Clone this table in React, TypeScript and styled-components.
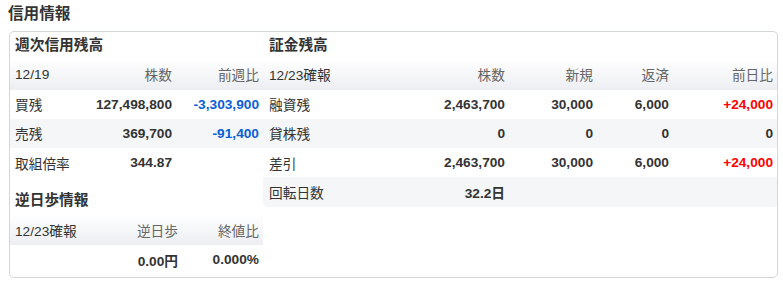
import React from "react";
import styled, { createGlobalStyle } from "styled-components";

const GlobalStyle = createGlobalStyle`
  html, body {
    margin: 0;
    padding: 0;
    background: #fff;
  }
  body {
    font-family: "Liberation Sans", "Noto Sans CJK JP", sans-serif;
    color: #333;
  }
`;

const Page = styled.div`
  width: 783px;
  display: flex;
  flex-direction: column;
`;

const Title = styled.h2`
  margin: 3px 0 0 8px;
  height: 22px;
  line-height: 22px;
  font-size: 15.6px;
  font-weight: bold;
  color: #333;
`;

const Panel = styled.div`
  margin: 6px 0 0 9px;
  width: 767px;
  border: 1px solid #d3d6db;
  border-radius: 5px;
  display: flex;
  padding-bottom: 2.5px;
`;

const Column = styled.div<{ $width: number }>`
  width: ${(p) => p.$width}px;
  display: flex;
  flex-direction: column;
`;

const Heading = styled.h3<{ $indent: number; $gap?: number }>`
  margin: ${(p) => p.$gap ?? 0}px 0 0 0;
  padding-left: ${(p) => p.$indent}px;
  height: 27px;
  line-height: 27px;
  font-size: 14.7px;
  font-weight: bold;
  color: #333;
`;

const Table = styled.table`
  border-collapse: collapse;
  table-layout: fixed;
  width: 100%;
  font-size: 13.7px;
`;

const HeadRow = styled.tr`
  height: 30.5px;
  background: linear-gradient(to bottom, #ffffff 0%, #eceef2 100%);
`;

const Row = styled.tr<{ $shade?: boolean; $last?: boolean }>`
  height: 29.3px;
  background: ${(p) => (p.$shade ? "#f5f6f8" : "#fff")};
  td:first-child {
    border-bottom-left-radius: ${(p) => (p.$last ? "5px" : "0")};
  }
  td:last-child {
    border-bottom-right-radius: ${(p) => (p.$last ? "4px" : "0")};
  }
`;

const Th = styled.th<{ $indent?: number }>`
  padding: 0 4px 0 ${(p) => p.$indent ?? 4}px;
  font-weight: normal;
  text-align: right;
  color: #666;
  white-space: nowrap;
  &:first-child {
    text-align: left;
    color: #333;
  }
`;

const Label = styled.td<{ $indent: number }>`
  padding: 0 4px 0 ${(p) => p.$indent}px;
  text-align: left;
  white-space: nowrap;
`;

type Tone = "plain" | "up" | "down";

const Num = styled.td<{ $tone?: Tone }>`
  padding: 0 4px;
  text-align: right;
  font-weight: bold;
  white-space: nowrap;
  color: ${(p) =>
    p.$tone === "up" ? "#ff0000" : p.$tone === "down" ? "#0a60d6" : "#333"};
`;

const tone = (v: string): Tone =>
  v.startsWith("+") ? "up" : v.startsWith("-") ? "down" : "plain";

const weekly = [
  ["買残", "127,498,800", "-3,303,900"],
  ["売残", "369,700", "-91,400"],
  ["取組倍率", "344.87", ""],
];

const margin = [
  ["融資残", "2,463,700", "30,000", "6,000", "+24,000"],
  ["貸株残", "0", "0", "0", "0"],
  ["差引", "2,463,700", "30,000", "6,000", "+24,000"],
];

export default function App() {
  return (
    <Page>
      <GlobalStyle />
      <Title>信用情報</Title>
      <Panel>
        <Column $width={253}>
          <Heading $indent={5}>週次信用残高</Heading>
          <Table>
            <colgroup>
              <col style={{ width: 80 }} />
              <col style={{ width: 86 }} />
              <col style={{ width: 87 }} />
            </colgroup>
            <thead>
              <HeadRow>
                <Th $indent={5}>12/19</Th>
                <Th>株数</Th>
                <Th>前週比</Th>
              </HeadRow>
            </thead>
            <tbody>
              {weekly.map((r, i) => (
                <Row key={r[0]} $shade={i % 2 === 1}>
                  <Label $indent={5}>{r[0]}</Label>
                  <Num>{r[1]}</Num>
                  <Num $tone={tone(r[2])}>{r[2]}</Num>
                </Row>
              ))}
            </tbody>
          </Table>

          <Heading $indent={5} $gap={10}>
            逆日歩情報
          </Heading>
          <Table>
            <colgroup>
              <col style={{ width: 90 }} />
              <col style={{ width: 82 }} />
              <col style={{ width: 81 }} />
            </colgroup>
            <thead>
              <HeadRow>
                <Th $indent={5}>12/23確報</Th>
                <Th>逆日歩</Th>
                <Th>終値比</Th>
              </HeadRow>
            </thead>
            <tbody>
              <Row>
                <Label $indent={5}></Label>
                <Num>0.00円</Num>
                <Num>0.000%</Num>
              </Row>
            </tbody>
          </Table>
        </Column>

        <Column $width={514}>
          <Heading $indent={6}>証金残高</Heading>
          <Table>
            <colgroup>
              <col style={{ width: 137 }} />
              <col style={{ width: 109 }} />
              <col style={{ width: 88 }} />
              <col style={{ width: 76 }} />
              <col style={{ width: 104 }} />
            </colgroup>
            <thead>
              <HeadRow>
                <Th $indent={6}>12/23確報</Th>
                <Th>株数</Th>
                <Th>新規</Th>
                <Th>返済</Th>
                <Th>前日比</Th>
              </HeadRow>
            </thead>
            <tbody>
              {margin.map((r, i) => (
                <Row key={r[0]} $shade={i % 2 === 1}>
                  <Label $indent={6}>{r[0]}</Label>
                  <Num>{r[1]}</Num>
                  <Num>{r[2]}</Num>
                  <Num>{r[3]}</Num>
                  <Num $tone={tone(r[4])}>{r[4]}</Num>
                </Row>
              ))}
              <Row $shade $last>
                <Label $indent={6}>回転日数</Label>
                <Num>32.2日</Num>
                <Num></Num>
                <Num></Num>
                <Num></Num>
              </Row>
            </tbody>
          </Table>
        </Column>
      </Panel>
    </Page>
  );
}
